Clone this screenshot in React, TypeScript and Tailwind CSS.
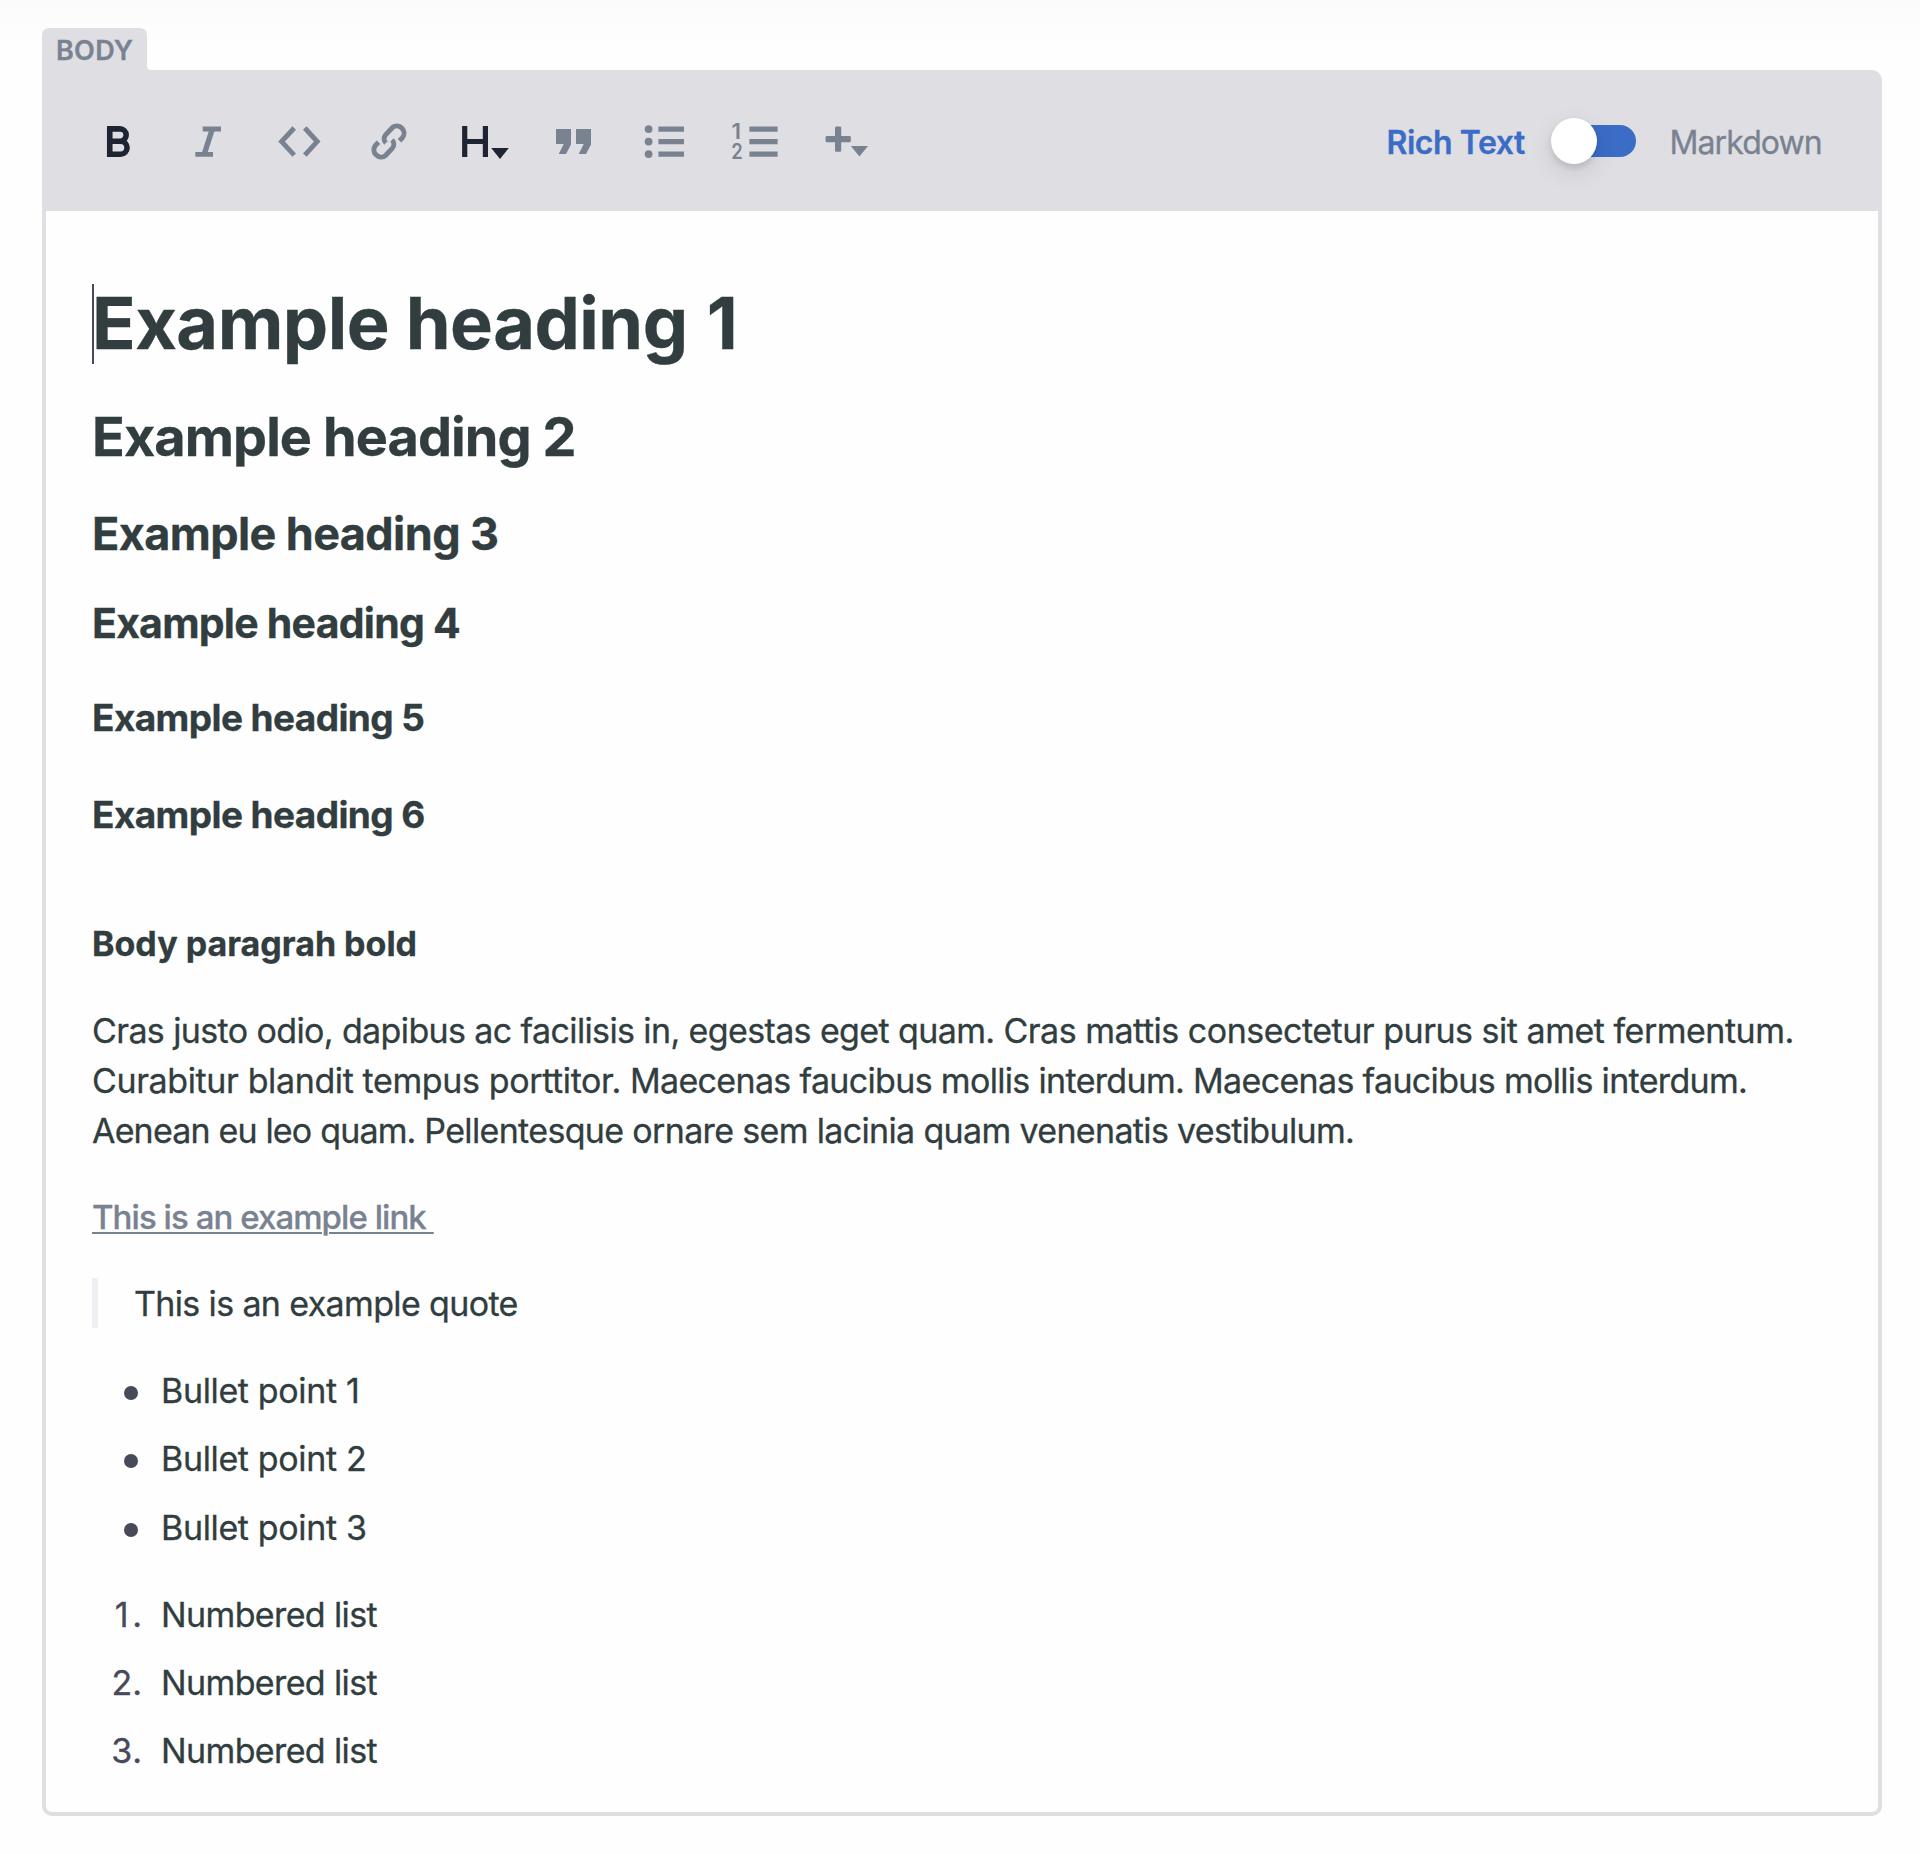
import type { ReactNode } from "react";

function ToolButton({ x, label, active, children }: { x: number; label: string; active?: boolean; children: ReactNode }) {
  return (
    <button aria-label={label} className={active ? "text-[#1e2532]" : "text-[#798291]"}>
      <svg width="90" height="49" viewBox={`${x} 116 90 49`} fill="none" stroke="currentColor" className="block">
        {children}
      </svg>
    </button>
  );
}

function Toolbar() {
  return (
    <div className="flex">
      <ToolButton x={74} label="Bold" active>
        <path strokeWidth="5.6" d="M109.75 128.9V154.2H120.6a6.45 6.45 0 0 0 0-12.9H109.75M120.6 141.3H120a6.2 6.2 0 0 0 0-12.4H107" />
      </ToolButton>
      <ToolButton x={164} label="Italic">
        <path strokeWidth="4.8" d="M202.7 129H221M195.3 154.3H213" />
        <path strokeWidth="5.4" d="M212.3 129L204.2 154.3" />
      </ToolButton>
      <ToolButton x={254} label="Code">
        <path strokeWidth="4.9" d="M294.2 128L281.6 141.6L294.2 155.2M304.8 128L317.2 141.6L304.8 155.2" />
      </ToolButton>
      <ToolButton x={344} label="Link">
        <path strokeWidth="5" d="M399.5 140.8L402.3 137.9A7.2 7.2 0 0 0 392.2 127.7L385.8 134.6A6 6 0 0 0 386 143" />
        <path strokeWidth="5" d="M378.5 142.2L375.7 145.1A7.2 7.2 0 0 0 385.8 155.3L392.2 148.4A6 6 0 0 0 392 140" />
      </ToolButton>
      <ToolButton x={434} label="Headings" active>
        <path strokeWidth="5.2" d="M464.7 126V157M485.4 126V157M464.7 141.5H485.4" />
        <path stroke="none" fill="currentColor" d="M491.2 148H508.8L500 159Z" />
      </ToolButton>
      <ToolButton x={524} label="Quote">
        <path stroke="none" fill="currentColor" d="M556 129H571V144.5L566 154H558.7L563.7 144H556ZM576 129H591V144.5L586 154H578.7L583.7 144H576Z" />
      </ToolButton>
      <ToolButton x={614} label="Bulleted list">
        <g stroke="none" fill="currentColor">
          <circle cx="648.6" cy="129.1" r="3.9" />
          <circle cx="648.6" cy="141.6" r="3.9" />
          <circle cx="648.6" cy="154.1" r="3.9" />
        </g>
        <path strokeWidth="5.2" d="M658.4 129.1H684M658.4 141.6H684M658.4 154.1H684" />
      </ToolButton>
      <ToolButton x={704} label="Numbered list">
        <g stroke="none" fill="currentColor" className="text-[21px] font-semibold">
          <text x="731.5" y="139" textLength="9.5" lengthAdjust="spacingAndGlyphs">1</text>
          <text x="731.3" y="159" textLength="11.5" lengthAdjust="spacingAndGlyphs">2</text>
        </g>
        <path strokeWidth="5.2" d="M749.4 129.1H777.6M749.4 141.6H777.6M749.4 154.1H777.6" />
      </ToolButton>
      <ToolButton x={794} label="Insert">
        <g stroke="none" fill="currentColor">
          <rect x="835" y="126.6" width="6.2" height="25.2" rx="1.2" />
          <rect x="825.6" y="136.1" width="25.2" height="6.2" rx="1.2" />
          <path d="M850.8 146H868L859.4 156.6Z" />
        </g>
      </ToolButton>
    </div>
  );
}

function ModeToggle() {
  return (
    <div className="flex items-center text-[32px] leading-[40px] [-webkit-text-stroke:0.3px]">
      <span className="relative top-[2px] w-[164px] font-semibold tracking-[-0.45px] text-[#3b6cc6]">Rich Text</span>
      <button aria-label="Editor mode" className="relative top-[0.5px] flex h-[46px] w-[85px] items-center">
        <span className="ml-[5px] h-8 w-20 rounded-full bg-[#3b6cc6]" />
        <span className="absolute left-0 top-0 size-[46px] rounded-full bg-white shadow-[0_4px_6px_rgba(14,30,37,0.12),0_8px_24px_rgba(14,30,37,0.1)]" />
      </button>
      <span className="relative top-[2px] ml-[34px] w-[153px] tracking-[-0.9px] text-[#798291]">Markdown</span>
    </div>
  );
}

export default function App() {
  return (
    <div className="flex h-[1854px] w-[1920px] flex-col items-start whitespace-nowrap bg-[#fefefe] bg-[linear-gradient(#fbfbfb,#fefefe_50px)] pl-[42px] pt-[28px] font-['Inter',sans-serif] text-[#313d3e]">
      <div className="relative h-[42px] w-[105px] rounded-t-[7px] bg-[#dfdee3] pl-[14px] text-[27px] font-semibold leading-[46px] tracking-[0.3px] text-[#798291] [-webkit-text-stroke:0.3px]">
        BODY
        <span className="absolute -right-[3px] bottom-0 size-[3px] bg-[radial-gradient(circle_at_100%_0,transparent_2.5px,#dfdee3_3px)]" />
      </div>
      <div className="h-[1746px] w-[1840px] rounded-[10px] rounded-tl-none border-4 border-[#dfdee3]">
        <header className="flex h-[137px] items-center justify-between bg-[#dfdee3] pb-1 pl-7 pr-[55.5px]">
          <Toolbar />
          <ModeToggle />
        </header>
        <main className="px-[46px] pt-[68px] text-[34px] leading-[50px] tracking-[-0.56px] [-webkit-text-stroke:0.3px]">
          <h1 className="relative text-[72px] font-bold leading-[88px] tracking-[-0.5px]">
            <span className="absolute left-0 top-[5px] h-20 w-[2px] bg-[#464a59]" />
            Example heading <span className="ml-[2.5px]">1</span>
          </h1>
          <h2 className="mt-[37px] text-[54px] font-bold leading-[66px] tracking-[-0.91px]">Example heading 2</h2>
          <h3 className="mt-[37px] text-[45px] font-bold leading-[54px] tracking-[-0.6px]">Example heading 3</h3>
          <h4 className="mt-[37px] text-[41px] font-bold tracking-[-0.76px]">Example heading 4</h4>
          <h5 className="mt-[45px] text-[37px] font-bold tracking-[-0.59px]">Example heading 5</h5>
          <h6 className="mt-[47px] text-[37px] font-bold tracking-[-0.59px]">Example heading 6</h6>
          <p className="mt-[79px] font-bold tracking-[0px]">Body paragrah bold</p>
          <p className="mt-[37px]">
            <span className="tracking-[-0.62px]">Cras justo odio, dapibus ac facilisis in, egestas eget quam. </span>
            <span className="tracking-[-0.49px]">Cras mattis consectetur purus sit amet fermentum.</span>
            <br />
            <span className="tracking-[-0.38px]">Curabitur blandit tempus porttitor. </span>
            <span className="tracking-[-0.67px]">Maecenas faucibus mollis interdum. Maecenas faucibus mollis interdum.</span>
            <br />
            <span className="tracking-[-0.83px]">Aenean eu leo quam. </span>
            <span className="tracking-[-0.66px]">Pellentesque ornare sem lacinia quam venenatis vestibulum.</span>
          </p>
          <p className="mt-9">
            <a className="whitespace-pre text-[33px] font-medium tracking-[-0.94px] text-[#798291] underline decoration-2 underline-offset-[3px]">{"This is an example link "}</a>
          </p>
          <blockquote className="mt-9 h-[50px] border-l-[6px] border-[#eeeef3] pl-9 leading-[52px] tracking-[-0.64px]">This is an example quote</blockquote>
          <ul className="mt-[38px] flex flex-col gap-[18.4px] pl-8 tracking-[-0.36px]">
            {[1, 2, 3].map((n) => (
              <li key={n} className="flex items-center">
                <span className="relative top-[2px] mr-[23px] size-[14px] rounded-full bg-[#464a59]" />
                Bullet point {n}
              </li>
            ))}
          </ul>
          <ol className="mt-[37.2px] flex flex-col gap-[18px] tracking-[-0.62px]">
            {[1, 2, 3].map((n) => (
              <li key={n} className="flex">
                <span className="mr-[19px] flex w-[50px] justify-end text-[#464a59]">
                  <span className={n === 1 ? "tracking-[3.5px]" : "tracking-[0px]"}>{n}</span>
                  <span className="tracking-[0px]">.</span>
                </span>
                Numbered list
              </li>
            ))}
          </ol>
        </main>
      </div>
    </div>
  );
}
